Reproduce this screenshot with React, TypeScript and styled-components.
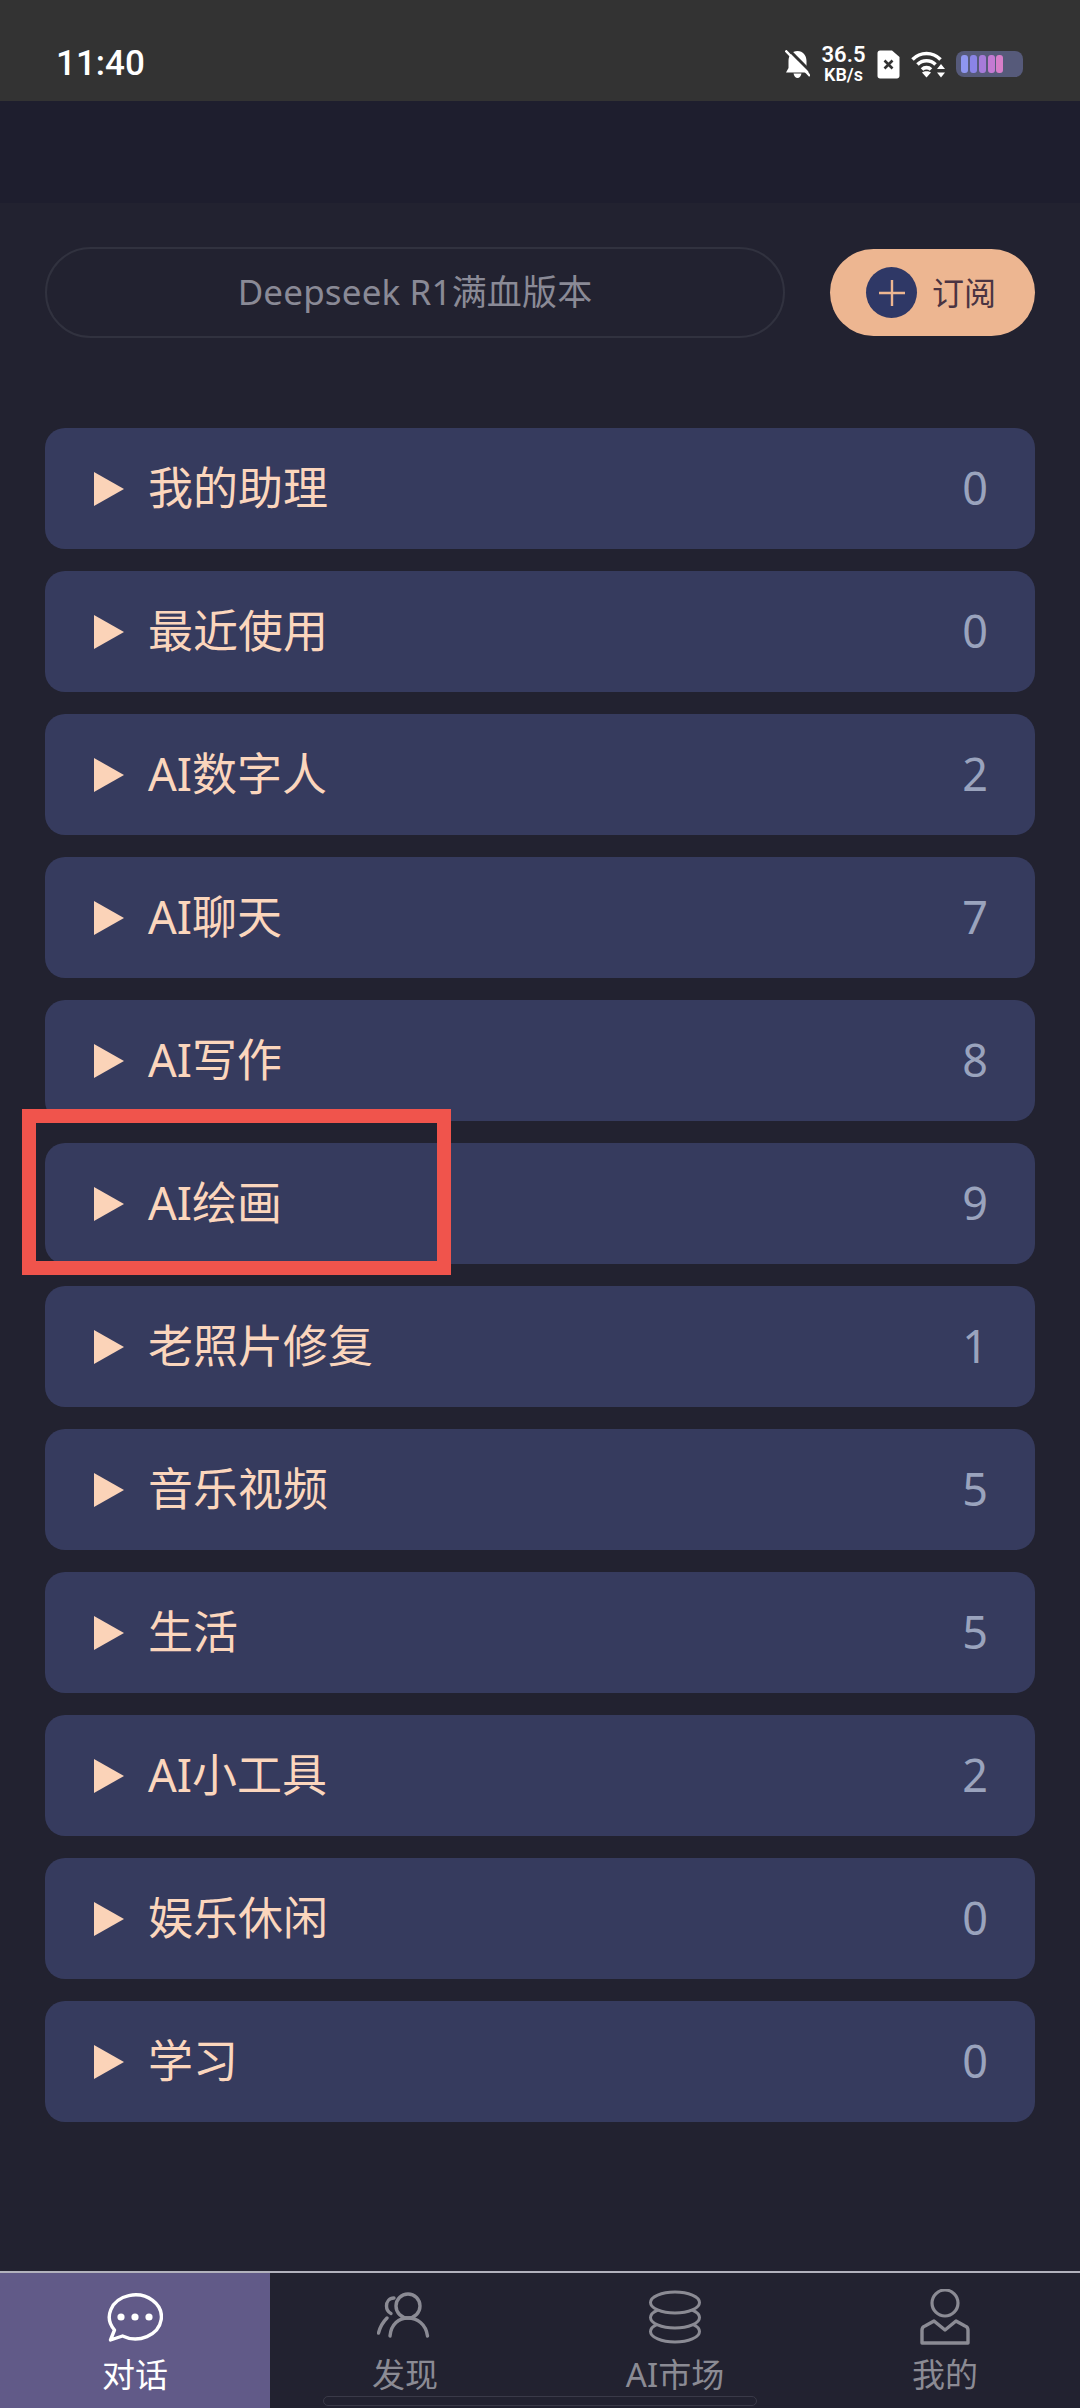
import React from 'react';
import styled, { createGlobalStyle } from 'styled-components';

const GlobalStyle = createGlobalStyle`
  html, body {
    margin: 0;
    padding: 0;
    background: #222230;
  }
  *, *::before, *::after {
    box-sizing: border-box;
  }
`;

const FONT = `"Noto Sans", "Noto Sans CJK SC", sans-serif`;

const Page = styled.div`
  width: 1080px;
  height: 2408px;
  display: flex;
  flex-direction: column;
  background: #222230;
  font-family: ${FONT};
  overflow: hidden;
`;

const StatusBar = styled.div`
  height: 101px;
  flex: none;
  display: flex;
  align-items: center;
  justify-content: space-between;
  padding: 27px 57px 0 56px;
  background: #333333;
  color: #fff;
`;

const Time = styled.div`
  font-family: Roboto, sans-serif;
  font-size: 35px;
  font-weight: 500;
  line-height: 1;
  margin-top: -1px;
`;

const StatusIcons = styled.div`
  display: flex;
  align-items: center;
  gap: 11px;
`;

const NetSpeed = styled.div`
  width: 45px;
  display: flex;
  flex-direction: column;
  align-items: center;
  font-family: Roboto, sans-serif;
  font-weight: 600;
  color: #fff;
`;

const SpeedValue = styled.span`
  font-size: 22px;
  line-height: 22px;
`;

const SpeedUnit = styled.span`
  font-size: 18px;
  line-height: 18px;
`;

const TopBand = styled.div`
  height: 102px;
  flex: none;
  background: #1e1e2e;
`;

const Content = styled.div`
  flex: 1;
  display: flex;
  flex-direction: column;
  padding: 44px 45px 0 45px;
`;

const SearchRow = styled.div`
  display: flex;
  align-items: center;
  justify-content: space-between;
`;

const SearchPill = styled.div`
  width: 740px;
  height: 91px;
  display: flex;
  align-items: center;
  justify-content: center;
  padding-bottom: 6px;
  border: 2px solid #31323f;
  border-radius: 46px;
  font-size: 35px;
  letter-spacing: 0.15px;
  color: #8a8a96;
`;

const SubscribeButton = styled.div`
  width: 205px;
  height: 87px;
  display: flex;
  align-items: center;
  padding-left: 36px;
  gap: 15px;
  background: #edb691;
  border-radius: 44px;
  font-size: 32px;
  color: #4a3442;
`;

const ButtonLabel = styled.span`
  margin-top: -3px;
`;

const PlusCircle = styled.div`
  width: 51px;
  height: 51px;
  flex: none;
  display: flex;
  align-items: center;
  justify-content: center;
  background: #2f3866;
  border-radius: 50%;
`;

const CategoryList = styled.div`
  display: flex;
  flex-direction: column;
  gap: 22px;
  margin-top: 90px;
`;

const Row = styled.div<{ $marked?: boolean }>`
  position: relative;
  height: 121px;
  display: flex;
  align-items: center;
  padding: 0 47px 0 49px;
  background: #363b5e;
  border-radius: 20px;

  ${({ $marked }) =>
    $marked &&
    `
    &::after {
      content: '';
      position: absolute;
      left: -23px;
      top: -34px;
      width: 429px;
      height: 166px;
      border: 14px solid #f0544c;
    }
  `}
`;

const Triangle = styled.div`
  width: 0;
  height: 0;
  flex: none;
  border-top: 17px solid transparent;
  border-bottom: 17px solid transparent;
  border-left: 30px solid #fbd3b8;
  margin-right: 24px;
`;

const RowTitle = styled.div`
  flex: 1;
  font-size: 45px;
  line-height: 60px;
  margin-top: -1px;
  color: #fbd6bd;
`;

const RowCount = styled.div`
  font-size: 45px;
  line-height: 60px;
  margin-top: -1px;
  color: #9aa3bd;
`;

const BottomNav = styled.div`
  position: relative;
  height: 137px;
  flex: none;
  display: flex;
  border-top: 2px solid #b2b2bd;
`;

const Tab = styled.div<{ $active?: boolean }>`
  width: 270px;
  display: flex;
  flex-direction: column;
  align-items: center;
  padding-top: 16px;
  background: ${({ $active }) => ($active ? '#615a88' : 'transparent')};
  color: ${({ $active }) => ($active ? '#ffffff' : '#8b8b94')};
`;

const TabIcon = styled.svg`
  width: 56px;
  height: 56px;
  flex: none;
  fill: none;
  stroke: currentColor;
`;

const TabLabel = styled.div`
  font-size: 33px;
  line-height: 44px;
  margin-top: 8px;
`;

const HomeIndicator = styled.div`
  position: absolute;
  left: 323px;
  bottom: 2px;
  width: 434px;
  height: 10px;
  border: 1px solid #3a3a48;
  border-radius: 5px;
`;

const categories: { title: string; count: number }[] = [
  { title: '我的助理', count: 0 },
  { title: '最近使用', count: 0 },
  { title: 'AI数字人', count: 2 },
  { title: 'AI聊天', count: 7 },
  { title: 'AI写作', count: 8 },
  { title: 'AI绘画', count: 9 },
  { title: '老照片修复', count: 1 },
  { title: '音乐视频', count: 5 },
  { title: '生活', count: 5 },
  { title: 'AI小工具', count: 2 },
  { title: '娱乐休闲', count: 0 },
  { title: '学习', count: 0 },
];

const BellOffIcon = () => (
  <svg width="25" height="28" viewBox="0 0 25 28">
    <path
      d="M12.5 1C7 1 3.5 5.5 3.5 11V18L1 22.5H24L21.5 18V11C21.5 5.5 18 1 12.5 1Z"
      fill="#fff"
    />
    <path d="M8.5 23.5H16.5C16 26 14.5 28 12.5 28C10.5 28 9 26 8.5 23.5Z" fill="#fff" />
    <path d="M3 -1L27 23" stroke="#333333" strokeWidth="3" />
    <path d="M0.5 0.5L25 26" stroke="#fff" strokeWidth="2.4" />
  </svg>
);

const SimIcon = () => (
  <svg width="23" height="29" viewBox="0 0 23 29">
    <path
      d="M3 0.5H15L22.5 7V26C22.5 27.6 21.2 28.5 20 28.5H3C1.5 28.5 0.5 27.6 0.5 26V3C0.5 1.5 1.5 0.5 3 0.5Z"
      fill="#fff"
    />
    <path d="M7.5 10.5L15.5 18.5M15.5 10.5L7.5 18.5" stroke="#333333" strokeWidth="2.6" />
  </svg>
);

const WifiIcon = () => (
  <svg width="34" height="28" viewBox="0 0 34 28" fill="none">
    <path d="M1.5 9.5C9.5 1.5 21.5 1.5 29.5 9.5" stroke="#fff" strokeWidth="3.6" />
    <path d="M6.5 14.5C11.5 9.5 19.5 9.5 24.5 14.5" stroke="#fff" strokeWidth="3.6" />
    <path d="M11 19.5C13.5 17 17.5 17 20 19.5" stroke="#fff" strokeWidth="3.6" />
    <path d="M15.5 27.5L11 22.5C13.5 20.7 17.5 20.7 20 22.5Z" fill="#fff" />
    <path d="M30 14L34 19H26ZM30 27.5L26 22.5H34Z" fill="#fff" />
  </svg>
);

const batteryBars: { x: number; color: string }[] = [
  { x: 5, color: '#8f96ef' },
  { x: 14, color: '#8a84e6' },
  { x: 23, color: '#a67bd9' },
  { x: 32, color: '#c47ad3' },
  { x: 40, color: '#d77ec9' },
];

const BatteryIcon = () => (
  <svg width="67" height="26" viewBox="0 0 67 26">
    <rect width="67" height="26" rx="8" fill="#565a7a" />
    {batteryBars.map((bar) => (
      <rect key={bar.x} x={bar.x} y="4" width="7" height="18" rx="3" fill={bar.color} />
    ))}
  </svg>
);

const PlusIcon = () => (
  <svg width="28" height="28" viewBox="0 0 28 28">
    <path d="M14 1V27M1 14H27" stroke="#edb691" strokeWidth="2.4" />
  </svg>
);

const ChatIcon = () => (
  <TabIcon viewBox="0 0 56 56">
    <path d="M3.5 51L7.5 41A26 22 0 1 1 15.5 47Z" strokeWidth="3.4" strokeLinejoin="round" />
    <circle cx="14" cy="28" r="3.6" fill="currentColor" stroke="none" />
    <circle cx="28" cy="28" r="3.6" fill="currentColor" stroke="none" />
    <circle cx="42" cy="28" r="3.6" fill="currentColor" stroke="none" />
  </TabIcon>
);

const PeopleIcon = () => (
  <TabIcon viewBox="0 0 56 56">
    <circle cx="31" cy="17" r="12" strokeWidth="3.4" />
    <path d="M13 47C14 35 22 29 31 29C40 29 49 35 50.5 47" strokeWidth="3.4" strokeLinecap="round" />
    <path d="M17 9C12 9 9.5 13 9.5 17C9.5 20 11 23 14 24.5" strokeWidth="3.4" strokeLinecap="round" />
    <path d="M10 29C6 33 3 38 1.5 44" strokeWidth="3.4" strokeLinecap="round" />
  </TabIcon>
);

const CoinsIcon = () => (
  <TabIcon viewBox="0 0 56 56">
    <ellipse cx="28" cy="42.5" rx="24.5" ry="10.5" fill="#222230" strokeWidth="3" />
    <ellipse cx="28" cy="28.5" rx="24.5" ry="10.5" fill="#222230" strokeWidth="3" />
    <ellipse cx="28" cy="13.5" rx="24.5" ry="10.5" fill="#222230" strokeWidth="3" />
  </TabIcon>
);

const ProfileIcon = () => (
  <TabIcon viewBox="0 0 56 56">
    <circle cx="28" cy="14" r="13" strokeWidth="3.2" />
    <path
      d="M5 54V41Q5 38 8 37L17 32L28 41L39 32L48 37Q51 38 51 41V54Z"
      strokeWidth="3.4"
      strokeLinejoin="round"
    />
  </TabIcon>
);

const App: React.FC = () => {
  return (
    <Page>
      <GlobalStyle />
      <StatusBar>
        <Time>11:40</Time>
        <StatusIcons>
          <BellOffIcon />
          <NetSpeed>
            <SpeedValue>36.5</SpeedValue>
            <SpeedUnit>KB/s</SpeedUnit>
          </NetSpeed>
          <SimIcon />
          <WifiIcon />
          <BatteryIcon />
        </StatusIcons>
      </StatusBar>
      <TopBand />
      <Content>
        <SearchRow>
          <SearchPill>Deepseek R1满血版本</SearchPill>
          <SubscribeButton>
            <PlusCircle>
              <PlusIcon />
            </PlusCircle>
            <ButtonLabel>订阅</ButtonLabel>
          </SubscribeButton>
        </SearchRow>
        <CategoryList>
          {categories.map((item) => (
            <Row key={item.title} $marked={item.title === 'AI绘画'}>
              <Triangle />
              <RowTitle>{item.title}</RowTitle>
              <RowCount>{item.count}</RowCount>
            </Row>
          ))}
        </CategoryList>
      </Content>
      <BottomNav>
        <Tab $active>
          <ChatIcon />
          <TabLabel>对话</TabLabel>
        </Tab>
        <Tab>
          <PeopleIcon />
          <TabLabel>发现</TabLabel>
        </Tab>
        <Tab>
          <CoinsIcon />
          <TabLabel>AI市场</TabLabel>
        </Tab>
        <Tab>
          <ProfileIcon />
          <TabLabel>我的</TabLabel>
        </Tab>
        <HomeIndicator />
      </BottomNav>
    </Page>
  );
};

export default App;
